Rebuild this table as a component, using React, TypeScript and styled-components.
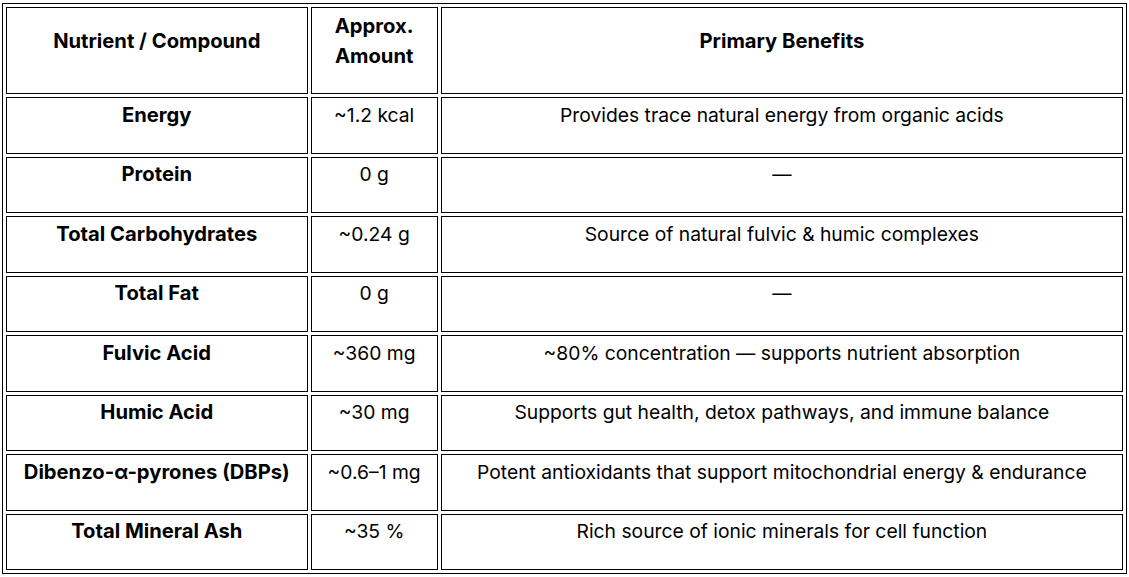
import React from 'react';
import styled, { createGlobalStyle } from 'styled-components';

const GlobalStyle = createGlobalStyle`
  html, body {
    margin: 0;
    padding: 0;
    background: #ffffff;
  }
  body {
    font-family: Inter, 'Liberation Sans', Arial, sans-serif;
    color: #000000;
  }
`;

type rowType = {
  name: string;
  amount: string;
  benefit: string;
};

const rows: rowType[] = [
  {
    name: 'Energy',
    amount: '~1.2 kcal',
    benefit: 'Provides trace natural energy from organic acids',
  },
  { name: 'Protein', amount: '0 g', benefit: '—' },
  {
    name: 'Total Carbohydrates',
    amount: '~0.24 g',
    benefit: 'Source of natural fulvic & humic complexes',
  },
  { name: 'Total Fat', amount: '0 g', benefit: '—' },
  {
    name: 'Fulvic Acid',
    amount: '~360 mg',
    benefit: '~80% concentration — supports nutrient absorption',
  },
  {
    name: 'Humic Acid',
    amount: '~30 mg',
    benefit: 'Supports gut health, detox pathways, and immune balance',
  },
  {
    name: 'Dibenzo-α-pyrones (DBPs)',
    amount: '~0.6–1 mg',
    benefit: 'Potent antioxidants that support mitochondrial energy & endurance',
  },
  {
    name: 'Total Mineral Ash',
    amount: '~35 %',
    benefit: 'Rich source of ionic minerals for cell function',
  },
];

export default function App() {
  return (
    <>
      <GlobalStyle />
      <Page>
        <Table>
          <colgroup>
            <col style={{ width: 301 }} />
            <col style={{ width: 127 }} />
            <col style={{ width: 681 }} />
          </colgroup>
          <thead>
            <HeadRow>
              <HeadCell>Nutrient / Compound</HeadCell>
              <HeadCell>
                Approx.
                <br />
                Amount
              </HeadCell>
              <HeadCell>Primary Benefits</HeadCell>
            </HeadRow>
          </thead>
          <tbody>
            {rows.map((row) => (
              <BodyRow key={row.name}>
                <Cell bold>{row.name}</Cell>
                <Cell>{row.amount}</Cell>
                <Cell>{row.benefit}</Cell>
              </BodyRow>
            ))}
          </tbody>
        </Table>
      </Page>
    </>
  );
}

const Page = styled.div`
  padding: 3px 0 0 2px;
`;

const Table = styled.table`
  width: 1125px;
  table-layout: fixed;
  border-collapse: separate;
  border-spacing: 3px;
  border: 1px solid #000;
`;

const HeadRow = styled.tr`
  height: 87px;
`;

const BodyRow = styled.tr`
  height: 56.5px;
`;

const HeadCell = styled.th`
  border: 1px solid #000;
  padding: 2px 2px 21px;
  font-size: 20.2px;
  font-weight: 700;
  line-height: 30px;
  text-align: center;
  vertical-align: middle;
`;

const Cell = styled.td<{ bold?: boolean }>`
  border: 1px solid #000;
  padding: 1px 2px 22px;
  font-size: ${(p) => (p.bold ? '20.2px' : '19.3px')};
  font-weight: ${(p) => (p.bold ? 700 : 400)};
  line-height: 30px;
  text-align: center;
  vertical-align: middle;
  white-space: nowrap;
`;
